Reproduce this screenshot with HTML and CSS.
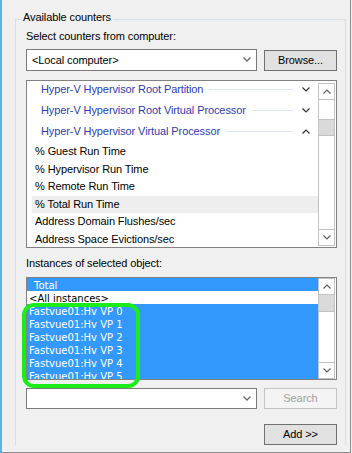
FILE: index.html
```html
<!DOCTYPE html>
<html lang="en">
<head>
<meta charset="UTF-8">
<meta name="viewport" content="width=device-width, initial-scale=1.0">
<title>Add Counters</title>
<link rel="stylesheet" href="styles.css">
</head>
<body>
<div class="window">
    <fieldset class="group">
        <legend>Available counters</legend>
        <div class="label">Select counters from computer:</div>

        <div class="row row-top">
            <div class="combo">
                <span class="combo-text">&lt;Local computer&gt;</span>
                <svg class="combo-arrow" width="8" height="5" viewBox="0 0 8 5"><polyline points="0.5,0.5 4,4 7.5,0.5" fill="none" stroke="#6a6a6a" stroke-width="1.3"/></svg>
            </div>
            <div class="btn">Browse...</div>
        </div>

        <!-- counters list -->
        <div class="list counters">
            <div class="list-body">
                <div class="cat cat-first">
                    <span class="cat-name">Hyper-V Hypervisor Root Partition</span>
                    <i class="cat-rule"></i>
                    <svg class="cat-chev" width="8" height="5" viewBox="0 0 8 5"><polyline points="0.5,0.5 4,4 7.5,0.5" fill="none" stroke="#333" stroke-width="1.2"/></svg>
                </div>
                <div class="cat">
                    <span class="cat-name">Hyper-V Hypervisor Root Virtual Processor</span>
                    <i class="cat-rule"></i>
                    <svg class="cat-chev" width="8" height="5" viewBox="0 0 8 5"><polyline points="0.5,0.5 4,4 7.5,0.5" fill="none" stroke="#333" stroke-width="1.2"/></svg>
                </div>
                <div class="cat">
                    <span class="cat-name">Hyper-V Hypervisor Virtual Processor</span>
                    <i class="cat-rule"></i>
                    <svg class="cat-chev" width="8" height="5" viewBox="0 0 8 5"><polyline points="0.5,4.5 4,1 7.5,4.5" fill="none" stroke="#333" stroke-width="1.2"/></svg>
                </div>
                <div class="item">% Guest Run Time</div>
                <div class="item">% Hypervisor Run Time</div>
                <div class="item">% Remote Run Time</div>
                <div class="item item-hover">% Total Run Time</div>
                <div class="item">Address Domain Flushes/sec</div>
                <div class="item">Address Space Evictions/sec</div>
            </div>
            <div class="sb sb-counters">
                <div class="sb-btn"><svg width="8" height="5" viewBox="0 0 8 5"><polyline points="0.5,4.5 4,1 7.5,4.5" fill="none" stroke="#606060" stroke-width="1.2"/></svg></div>
                <div class="sb-track"><div class="sb-thumb"></div></div>
                <div class="sb-btn"><svg width="8" height="5" viewBox="0 0 8 5"><polyline points="0.5,0.5 4,4 7.5,0.5" fill="none" stroke="#606060" stroke-width="1.2"/></svg></div>
            </div>
        </div>

        <div class="label label-inst">Instances of selected object:</div>

        <!-- instances list -->
        <div class="list instances">
            <div class="list-body">
                <div class="inst sel">_Total</div>
                <div class="inst">&lt;All instances&gt;</div>
                <div class="inst sel">Fastvue01:Hv VP 0</div>
                <div class="inst sel">Fastvue01:Hv VP 1</div>
                <div class="inst sel">Fastvue01:Hv VP 2</div>
                <div class="inst sel">Fastvue01:Hv VP 3</div>
                <div class="inst sel">Fastvue01:Hv VP 4</div>
                <div class="inst sel">Fastvue01:Hv VP 5</div>
            </div>
            <div class="sb sb-inst">
                <div class="sb-btn"><svg width="8" height="5" viewBox="0 0 8 5"><polyline points="0.5,4.5 4,1 7.5,4.5" fill="none" stroke="#606060" stroke-width="1.2"/></svg></div>
                <div class="sb-track"><div class="sb-thumb"></div></div>
                <div class="sb-btn"><svg width="8" height="5" viewBox="0 0 8 5"><polyline points="0.5,0.5 4,4 7.5,0.5" fill="none" stroke="#606060" stroke-width="1.2"/></svg></div>
            </div>
        </div>

        <div class="row row-search">
            <div class="combo combo-search">
                <span class="combo-text"></span>
                <svg class="combo-arrow" width="8" height="5" viewBox="0 0 8 5"><polyline points="0.5,0.5 4,4 7.5,0.5" fill="none" stroke="#6a6a6a" stroke-width="1.3"/></svg>
            </div>
            <div class="btn btn-disabled">Search</div>
        </div>

        <div class="row row-add">
            <div class="btn">Add &gt;&gt;</div>
        </div>
    </fieldset>

    <!-- annotation over the selected instances -->
    <div class="mark"></div>
</div>
</body>
</html>
```
FILE: styles.css
```css
html,
body {
    margin: 0;
    padding: 0;
    background: #f0f0f0;
}

.window {
    position: relative;
    box-sizing: border-box;
    width: 351px;
    height: 453px;
    overflow: hidden;
    background: #f0f0f0;
    border-left: 2px solid #5bb5e3;
    border-right: 1px solid #8c8c8c;
    border-bottom: 1px solid #8c8c8c;
    font-family: "Liberation Sans", Arial, sans-serif;
    font-size: 11px;
    letter-spacing: -0.1px;
    color: #000;
}

/* group box */
.group {
    box-sizing: border-box;
    width: 331px;
    min-width: 0;
    margin: 10px 0 0 13px;
    padding: 0 8px 0 10px;
    border: 1px solid #d5dfe5;
    border-bottom: none;
}

.group legend {
    margin-left: -5px;
    padding: 0 2px 4px;
    line-height: 15px;
}

.label {
    line-height: 15px;
}

.label-inst {
    margin-top: 8px;
}

.row {
    display: flex;
    align-items: flex-start;
}

.row-top {
    margin-top: 5px;
}

.row-search {
    margin-top: 8px;
}

.row-add {
    margin-top: 15px;
    justify-content: flex-end;
}

/* combo boxes */
.combo {
    box-sizing: border-box;
    width: 231px;
    height: 22px;
    display: flex;
    align-items: center;
    padding: 0 5px 0 5px;
    background: #fff;
    border: 1px solid #7a7a7a;
}

.combo-text {
    flex: 1;
    line-height: 20px;
}

.combo-arrow {
    display: block;
    margin-bottom: 1px;
}

.combo-search {
    height: 21px;
}

/* buttons */
.btn {
    box-sizing: border-box;
    width: 73px;
    height: 21px;
    margin-left: auto;
    line-height: 19px;
    text-align: center;
    background: #e1e1e1;
    border: 1px solid #707070;
}

.row-top .btn {
    margin-top: 1px;
}

.btn-disabled {
    background: #f4f4f4;
    border-color: #c4c4c4;
    color: #a0a0a0;
}

/* list boxes */
.list {
    box-sizing: border-box;
    display: flex;
    overflow: hidden;
    background: #fff;
    border: 1px solid #828282;
}

.counters {
    margin-top: 9px;
    height: 168px;
}

.instances {
    margin-top: 6px;
    height: 103px;
}

.list-body {
    flex: 1;
    min-width: 0;
    overflow: hidden;
}

.cat {
    box-sizing: border-box;
    height: 21px;
    padding: 0 8px 3px 14px;
    display: flex;
    align-items: center;
    line-height: 15px;
    color: #2b3db5;
    white-space: nowrap;
}

.cat-first {
    margin-top: -1px;
}

.cat-rule {
    flex: 1;
    height: 1px;
    margin: 0 9px 0 6px;
    background: #dbe5f3;
}

.cat-chev {
    display: block;
}

.item {
    height: 17.6px;
    margin-left: 5px;
    padding-left: 3px;
    line-height: 17.6px;
    white-space: nowrap;
}

.item-hover {
    background: #eeeeee;
}

.inst {
    box-sizing: border-box;
    height: 13px;
    padding: 2px 0 0 2px;
    font-family: "DejaVu Sans", Tahoma, sans-serif;
    font-size: 10px;
    letter-spacing: 0;
    line-height: 11px;
    white-space: nowrap;
}

.inst.sel {
    background: #3399ff;
    color: #fff;
}

/* scroll bars */
.sb {
    box-sizing: border-box;
    width: 17px;
    margin-right: 1px;
    display: flex;
    flex-direction: column;
}

.sb-counters {
    padding: 2px 0 1px;
}

.sb-btn {
    box-sizing: border-box;
    height: 17px;
    display: flex;
    align-items: center;
    justify-content: center;
    border: 1px solid #c2c2c2;
    background: #fff;
}

.sb-btn svg {
    display: block;
}

.sb-track {
    flex: 1;
    border-left: 1px solid #c2c2c2;
    border-right: 1px solid #c2c2c2;
}

.sb-thumb {
    box-sizing: border-box;
    margin: 0 -1px;
    background: #dadada;
    border: 1px solid #c2c2c2;
}

.sb-counters .sb-thumb {
    margin-top: 19px;
    height: 17px;
}

.sb-inst .sb-thumb {
    margin-top: -1px;
    height: 18px;
}

/* green annotation ring */
.mark {
    position: absolute;
    left: 20px;
    top: 303px;
    box-sizing: border-box;
    width: 118px;
    height: 85px;
    border: 4px solid #19ee19;
    border-radius: 12px;
}
```
